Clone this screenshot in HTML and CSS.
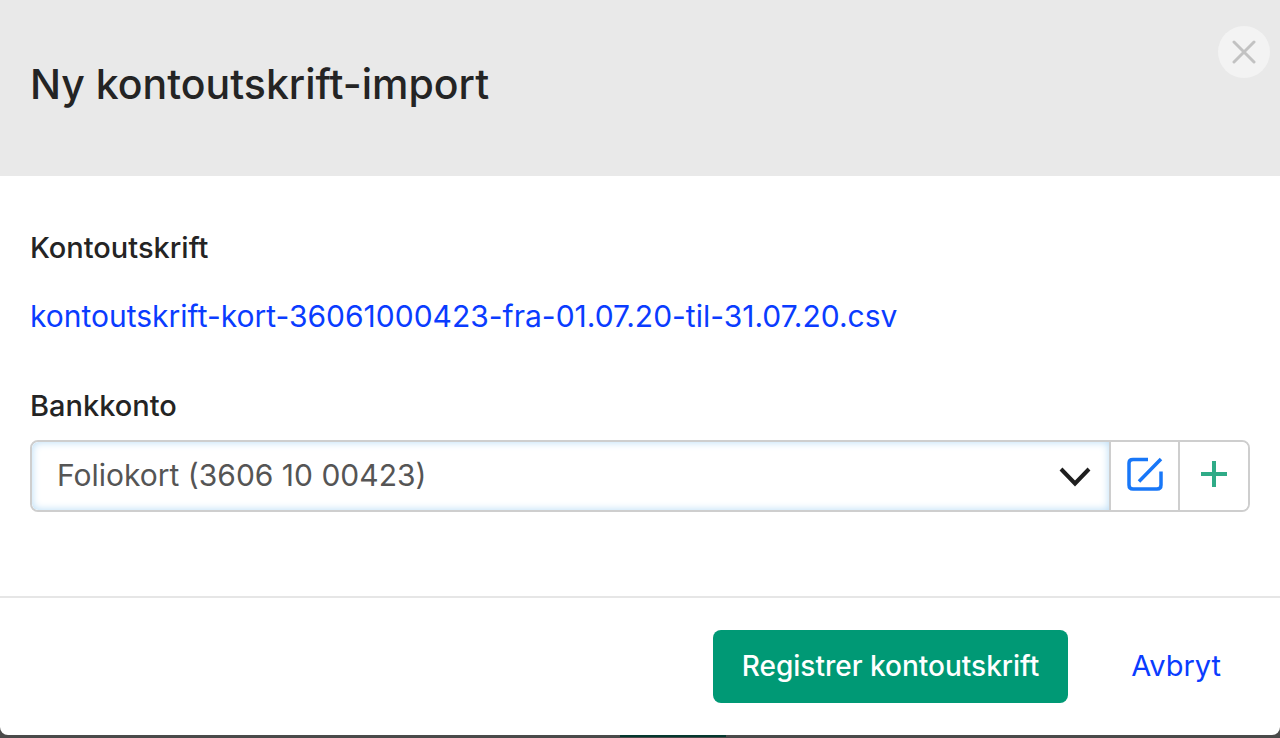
FILE: index.html
```html
<!DOCTYPE html>
<html lang="nb">
<head>
<meta charset="utf-8">
<meta name="viewport" content="width=device-width, initial-scale=1">
<title>Ny kontoutskrift-import</title>
<link rel="stylesheet" href="styles.css">
</head>
<body class="backdrop">
<form class="dialog" role="dialog" aria-labelledby="dialog-title">
  <header class="dialog-header">
    <h1 class="dialog-title" id="dialog-title">Ny kontoutskrift-import</h1>
    <button class="close" type="button" aria-label="Lukk">
      <svg width="24" height="24" viewBox="0 0 24 24" fill="none" stroke="currentColor" stroke-width="3" stroke-linecap="round"><path d="M2 2 22 22M22 2 2 22"/></svg>
    </button>
  </header>
  <main class="dialog-body">
    <section class="field file-field">
      <h2 class="label">Kontoutskrift</h2>
      <a class="file-link" href="#">kontoutskrift-kort-36061000423-fra-01.07.20-til-31.07.20.csv</a>
    </section>
    <section class="field">
      <label class="label" for="account">Bankkonto</label>
      <div class="input-group">
        <div class="select-wrap">
          <select class="select" id="account">
            <option>Foliokort (3606 10 00423)</option>
          </select>
          <svg class="chevron" width="32" height="20" viewBox="0 0 32 20" fill="none" stroke="currentColor" stroke-width="4"><path d="M2 2 16 16.500 30 2"/></svg>
        </div>
        <button class="addon edit" type="button" aria-label="Rediger bankkonto">
          <svg width="38" height="36" viewBox="0 0 38 36" fill="none" stroke="currentColor" stroke-width="3.500"><path d="M22 3.500H7Q3 3.500 3 7V29Q3 33 7 33H31Q35 33 35 29V15.500M13 25.500 35 3"/></svg>
        </button>
        <button class="addon add" type="button" aria-label="Ny bankkonto">
          <svg width="26" height="26" viewBox="0 0 26 26" fill="none" stroke="currentColor" stroke-width="4"><path d="M13 0V26M0 13H26"/></svg>
        </button>
      </div>
    </section>
  </main>
  <footer class="dialog-footer">
    <button class="button primary" type="submit">Registrer kontoutskrift</button>
    <button class="button link" type="button">Avbryt</button>
  </footer>
</form>
<div class="page-behind"><div class="page-button"></div></div>
</body>
</html>
```
FILE: styles.css
```css
* {
  box-sizing: border-box;
}

.backdrop {
  margin: 0;
  background: #4a4a4a;
  color: #242424;
  font: 400 30px/40px Inter, "Liberation Sans", sans-serif;
}

.dialog {
  overflow: hidden;
  border-radius: 0 0 8px 8px;
  background: #fff;
}

.dialog-header {
  display: flex;
  justify-content: space-between;
  align-items: flex-start;
  min-height: 176px;
  padding: 26px 10px 32px 30px;
  background: #e9e9e9;
}

.dialog-title {
  margin: 32px 0 0;
  font-size: 41px;
  line-height: 52px;
  font-weight: 500;
}

.close {
  display: grid;
  place-items: center;
  width: 52px;
  height: 52px;
  padding: 0;
  border: 0;
  border-radius: 50%;
  background: #f3f3f3;
  color: #c2c2c2;
}

.dialog-body {
  display: flex;
  flex-direction: column;
  gap: 50px;
  padding: 52px 30px 84px;
}

.label {
  display: block;
  margin: 0;
  font-size: 29px;
  line-height: 40px;
  font-weight: 500;
}

.file-field {
  display: flex;
  flex-direction: column;
  align-items: flex-start;
  gap: 28px;
}

.file-link {
  color: #0a3cff;
  text-decoration: none;
}

.input-group {
  display: flex;
  height: 72px;
  margin-top: 14px;
  border: 2px solid #cecece;
  border-radius: 8px;
  overflow: hidden;
}

.select-wrap {
  position: relative;
  flex: 1;
}

.select {
  appearance: none;
  width: 100%;
  height: 100%;
  padding: 0 64px 2px 25px;
  border: 0;
  border-radius: 6px 0 0 6px;
  outline: 0;
  background: #fff;
  box-shadow: inset 0 0 8px #b5daf5;
  color: #555;
  font: inherit;
}

.chevron {
  position: absolute;
  top: 25px;
  right: 18px;
  color: #1f1f1f;
  pointer-events: none;
}

.addon {
  display: grid;
  place-items: center;
  width: 69px;
  padding: 0 0 4px;
  border: 0;
  border-left: 2px solid #cecece;
  background: #fff;
}

.edit {
  color: #1877f8;
}

.add {
  width: 70px;
  color: #2fab87;
}

.dialog-footer {
  display: flex;
  justify-content: flex-end;
  gap: 34px;
  padding: 32px 30px;
  border-top: 2px solid #e6e6e6;
}

.button {
  height: 73px;
  padding: 0 29px 2px;
  border: 0;
  border-radius: 8px;
  font: inherit;
}

.primary {
  background: #009975;
  color: #fff;
  font-size: 28px;
  font-weight: 500;
}

.link {
  background: none;
  color: #0a3cff;
  font-size: 29px;
}

.page-behind {
  display: flex;
  justify-content: center;
  padding-right: 14px;
  padding-left: 80px;
}

.page-button {
  width: 106px;
  height: 2px;
  background: #06382e;
}
```
